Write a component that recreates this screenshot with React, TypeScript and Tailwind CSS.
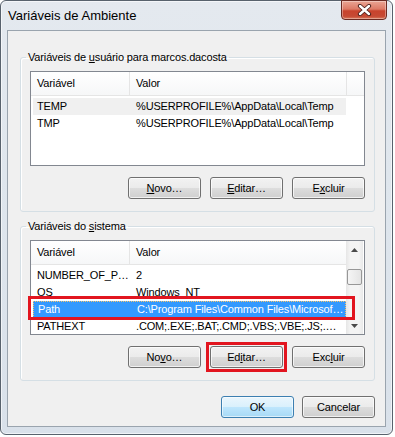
import type { ReactNode } from "react";

const sans = "font-['Liberation_Sans',Arial,sans-serif]";

const userVars = [
  { name: "TEMP", value: "%USERPROFILE%\\AppData\\Local\\Temp", state: "inactive" },
  { name: "TMP", value: "%USERPROFILE%\\AppData\\Local\\Temp", state: "" },
];

const systemVars = [
  { name: "NUMBER_OF_P…", value: "2", state: "" },
  { name: "OS", value: "Windows_NT", state: "" },
  { name: "Path", value: "C:\\Program Files\\Common Files\\Microsof…", state: "active" },
  { name: "PATHEXT", value: ".COM;.EXE;.BAT;.CMD;.VBS;.VBE;.JS;.…", state: "" },
];

function Btn({ children, primary }: { children: ReactNode; primary?: boolean }) {
  return (
    <button
      className={
        primary
          ? "flex h-[22px] w-[73px] items-center justify-center rounded-[3px] border border-[#3c7fb1] bg-[linear-gradient(#eaf6fd_0%,#d9f0fc_50%,#bee6fd_50%,#a7d9f5_100%)] text-black shadow-[inset_0_0_0_1px_rgba(255,255,255,0.6)]"
          : "flex h-[22px] w-[73px] items-center justify-center rounded-[3px] border border-[#707070] bg-[linear-gradient(#f2f2f2_0%,#ebebeb_50%,#dddddd_50%,#cfcfcf_100%)] text-black shadow-[inset_0_0_0_1px_rgba(255,255,255,0.7)]"
      }
    >
      {children}
    </button>
  );
}

function Arrow({ up }: { up?: boolean }) {
  return (
    <svg width="7" height="4" viewBox="0 0 7 4">
      <polygon points={up ? "0,4 7,4 3.5,0" : "0,0 7,0 3.5,4"} fill="#4a4a4a" />
    </svg>
  );
}

function Row({ name, value, state }: { name: string; value: string; state: string }) {
  const cls =
    state === "active"
      ? "ml-[2px] flex h-[17px] w-[313px] items-center border border-dotted border-[#f5c26b] bg-[#3399ff] text-white"
      : state === "inactive"
        ? "ml-[2px] flex h-[17px] w-[313px] items-center bg-[#f0f0f0] text-black"
        : "ml-[2px] flex h-[17px] w-[313px] items-center text-black";
  return (
    <div className={cls}>
      <div className="w-[97px] shrink-0 overflow-hidden whitespace-nowrap pl-[4px]">{name}</div>
      <div className="min-w-0 flex-1 overflow-hidden whitespace-nowrap pl-[6px]">{value}</div>
    </div>
  );
}

function Header({ filler }: { filler?: boolean }) {
  return (
    <div className="flex h-[24px] border-b border-[#e5e5e5] bg-[linear-gradient(#ffffff,#f6f7f8)] text-black">
      <div className="flex w-[99px] shrink-0 items-center border-r border-[#e5e5e5] pl-[6px]">Variável</div>
      {filler ? (
        <>
          <div className="flex w-[217px] shrink-0 items-center border-r border-[#e5e5e5] pl-[6px]">Valor</div>
          <div className="flex-1" />
        </>
      ) : (
        <div className="flex flex-1 items-center pl-[6px]">Valor</div>
      )}
    </div>
  );
}

export default function App() {
  return (
    <div className={`h-[437px] w-[395px] overflow-hidden bg-white text-[11px] tracking-[-0.15px] ${sans}`}>
      <div className="relative flex h-[435px] w-[393px] flex-col rounded-[6px] border border-[#58626d] bg-[linear-gradient(#e4e9ef,#dfe6ed_40%,#d9e1ea)] px-[6px] pb-[7px] shadow-[inset_0_0_0_1px_rgba(255,255,255,0.6)]">
        {/* title bar */}
        <div className="flex h-[29px] items-center pl-[1px] pt-[1px] text-[13px] tracking-normal text-black">
          Variáveis de Ambiente
        </div>
        <div className="absolute right-[5px] top-[-1px] flex h-[20px] w-[46px] items-center justify-center rounded-b-[4px] border border-[#6b2a22] bg-[linear-gradient(#eaa594_0%,#dd7a66_45%,#c8432d_55%,#c64a34_85%,#d97a5c_100%)] shadow-[inset_0_0_0_1px_rgba(255,255,255,0.35)]">
          <svg width="15" height="12" viewBox="0 0 15 12">
            <path d="M3 2 L12 10 M12 2 L3 10" stroke="#4a1f1a" strokeWidth="4.2" strokeLinecap="round" />
            <path d="M3 2 L12 10 M12 2 L3 10" stroke="#ffffff" strokeWidth="2.4" strokeLinecap="round" />
          </svg>
        </div>

        {/* client */}
        <div className="flex flex-1 flex-col border border-[#9aa4ae] bg-[#f0f0f0]">
          <fieldset className="ml-[12px] mr-[10px] mt-[19px] rounded-[3px] border border-[#d5dfe5] shadow-[inset_1px_1px_0_#fff]">
            <legend className="ml-[5px] px-[2px] leading-[15px] text-black">
              Variáveis de <u>u</u>suário para marcos.dacosta
            </legend>
            <div className="px-[9px] pb-[12px] pt-[6px]">
              <div className="h-[95px] overflow-hidden border border-[#828790] bg-white">
                <Header filler />
                <div className="pt-[2px]">
                  {userVars.map((v) => (
                    <Row key={v.name} {...v} />
                  ))}
                </div>
              </div>
              <div className="mt-[11px] flex justify-end gap-[9px]">
                <Btn>
                  <u>N</u>ovo…
                </Btn>
                <Btn>
                  <u>E</u>ditar…
                </Btn>
                <Btn>
                  E<u>x</u>cluir
                </Btn>
              </div>
            </div>
          </fieldset>

          <fieldset className="ml-[12px] mr-[10px] mt-[7px] rounded-[3px] border border-[#d5dfe5] shadow-[inset_1px_1px_0_#fff]">
            <legend className="ml-[5px] px-[2px] leading-[15px] text-black">
              Variáveis do <u>s</u>istema
            </legend>
            <div className="px-[9px] pb-[12px] pt-[6px]">
              <div className="relative">
                <div className="flex h-[95px] overflow-hidden border border-[#828790] bg-white">
                  <div className="w-[315px] shrink-0">
                    <Header />
                    <div className="pt-[2px]">
                      {systemVars.map((v) => (
                        <Row key={v.name} {...v} />
                      ))}
                    </div>
                  </div>
                  <div className="flex w-[17px] flex-col bg-[linear-gradient(90deg,#e6e6e6,#f4f4f4_25%,#f4f4f4_75%,#e9e9e9)]">
                    <div className="flex h-[17px] items-center justify-center">
                      <Arrow up />
                    </div>
                    <div className="mx-px mt-[11px] h-[16px] rounded-[2px] border border-[#979797] bg-[linear-gradient(90deg,#f5f5f5,#e4e4e4)]" />
                    <div className="flex-1" />
                    <div className="flex h-[17px] items-center justify-center">
                      <Arrow />
                    </div>
                  </div>
                </div>
                {/* highlight box around Path */}
                <div className="absolute left-[-2px] top-[56px] h-[24px] w-[327px] border-[3px] border-[#e2151f]" />
              </div>
              <div className="mt-[11px] flex justify-end gap-[9px]">
                <Btn>
                  No<u>v</u>o…
                </Btn>
                <div className="-m-[4px] border-[3px] border-[#e2151f] p-px">
                  <Btn>
                    Ed<u>i</u>tar…
                  </Btn>
                </div>
                <Btn>
                  Exc<u>l</u>uir
                </Btn>
              </div>
            </div>
          </fieldset>

          <div className="mr-[10px] mt-[15px] flex justify-end gap-[8px]">
            <Btn primary>OK</Btn>
            <Btn>Cancelar</Btn>
          </div>
        </div>
      </div>
    </div>
  );
}
